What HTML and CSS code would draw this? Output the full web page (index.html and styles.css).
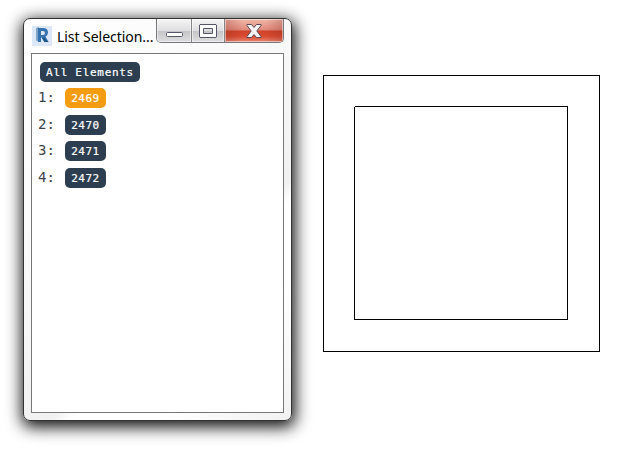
FILE: index.html
```html
<!DOCTYPE html>
<html lang="en">
<head>
<meta charset="utf-8">
<title>List Selection</title>
<link rel="stylesheet" href="styles.css">
</head>
<body>
<main class="workspace">
  <section class="window">
    <header class="titlebar">
      <svg class="app-icon" width="20" height="20" viewBox="0 0 20 20">
        <rect width="20" height="20" fill="#dce8f7"/>
        <path d="M4 2 7 1V16L4 14.500Z" fill="#7fa5c8"/>
        <path d="M6 2H11Q16 2 16 6.500 16 9.500 13.500 10.500L16.500 16H12.500L10 11.500H9V16H6ZM9 5V9H11Q13 9 13 7T11 5Z" fill="#3572b0" fill-rule="evenodd"/>
        <path d="M9.500 11.500H12L16.500 16H12.500Z" fill="#1f5588"/>
      </svg>
      <h1 class="title">List Selection...</h1>
      <div class="controls">
        <button class="control minimize" aria-label="Minimize"><svg width="17" height="5"><rect x=".5" y=".5" width="16" height="4" rx="1" fill="#fff" stroke="#555568"/></svg></button>
        <button class="control maximize" aria-label="Maximize"><svg width="18" height="14"><path d="M1 .5H17L17.500 1V13L17 13.500H1L.5 13V1ZM4.500 4.500V9.500H13.500V4.500Z" fill="#fff" fill-rule="evenodd" stroke="#555568"/></svg></button>
        <button class="control close" aria-label="Close"><svg width="16" height="14"><path d="M1 .5H5.500L8 3.500 10.500.5H15V1.500L10.800 7 15 12.500V13.500H10.500L8 10.500 5.500 13.500H1V12.500L5.200 7 1 1.500Z" fill="#f4f4f4" stroke="#5b4653"/></svg></button>
      </div>
    </header>
    <div class="content">
      <a class="tag all">All Elements</a>
      <ol class="elements">
        <li><span>1:</span><a class="tag active">2469</a></li>
        <li><span>2:</span><a class="tag">2470</a></li>
        <li><span>3:</span><a class="tag">2471</a></li>
        <li><span>4:</span><a class="tag">2472</a></li>
      </ol>
    </div>
  </section>
  <svg class="drawing" width="277" height="277" shape-rendering="crispEdges">
    <path d="M.5 .5H276.500V276.500H.5ZM32 31.500H244.500V244.500H31.500V32" fill="none" stroke="#000"/>
  </svg>
</main>
</body>
</html>
```
FILE: styles.css
```css
* { box-sizing: border-box; }
body { margin: 0; background: #fff; overflow: hidden; }
.workspace {
  display: flex;
  align-items: flex-start;
  gap: 31px;
  width: 644px;
  height: 452px;
  padding: 18px 0 0 23px;
}
.drawing { margin-top: 57px; }
.window {
  width: 269px;
  height: 403px;
  display: flex;
  flex-direction: column;
  padding: 0 7px 7px;
  border: 1px solid #333;
  border-radius: 7px;
  background: linear-gradient(135deg, #fff 0%, #fafafa 35%, #f1f1f1 64%, #fff 67%, #fff 80%, #f1f1f1 100%);
  box-shadow: 1px 4px 16px 2px rgba(0, 0, 0, .95);
}
.titlebar {
  height: 34px;
  display: flex;
  align-items: flex-start;
}
.app-icon { margin: 7px 0 0 1px; }
.title {
  width: 99px;
  margin: 7px 0 0 5px;
  font: 400 14px/22px "Noto Sans", sans-serif;
  letter-spacing: -.05px;
  white-space: nowrap;
  color: #000;
}
.controls {
  display: flex;
  width: 128px;
  height: 24px;
  border: 1px solid #77777b;
  border-top: 0;
  border-radius: 0 0 5px 5px;
  overflow: hidden;
}
.control {
  display: flex;
  align-items: center;
  justify-content: center;
  padding: 0;
  border: 0;
  box-shadow: inset 0 0 0 1px rgba(255, 255, 255, .5);
  background: linear-gradient(#f6f6f6, #dedee0 50%, #c4c4c7 51%, #dedee0);
}
.minimize { width: 35px; padding-top: 8px; border-right: 1px solid #858589; }
.maximize { width: 33px; border-right: 1px solid #858589; }
.close {
  flex: 1;
  background:
    linear-gradient(90deg, rgba(120, 30, 20, .25), transparent 30%, transparent 70%, rgba(120, 30, 20, .25)),
    linear-gradient(#f0b9ac, #e08878 49%, #cf4229 51%, #da4b31 75%, #e98773);
}
.content {
  flex: 1;
  border: 1px solid #777;
  background: #fff;
  padding: 8px 0 0 6px;
  font: 14px "DejaVu Sans Mono", monospace;
  color: #3c4348;
}
.tag {
  display: block;
  width: 41px;
  height: 20px;
  padding-top: 1px;
  border-radius: 5px;
  background: #2c3e50;
  color: #fff;
  font-size: 11px;
  line-height: 19px;
  letter-spacing: .5px;
  text-align: center;
  -webkit-text-stroke: .2px #fff;
}
.all { width: 100px; margin-left: 2px; letter-spacing: .7px; }
.active { background: #f39c12; }
.elements { list-style: none; margin: 3px 0 0; padding: 0; }
.elements li { display: flex; align-items: center; height: 26.500px; }
.elements span { width: 27px; line-height: 20px; transform: translateY(-1px); }
```
